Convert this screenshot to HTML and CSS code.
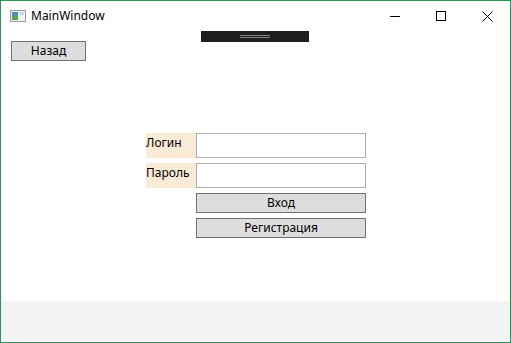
FILE: index.html
```html
<!DOCTYPE html>
<html lang="ru">
<head>
  <meta charset="UTF-8" />
  <title>MainWindow</title>
  <link rel="stylesheet" href="styles.css">
</head>
<body>
  <div class="window">
    <div class="titlebar">
      <svg class="app-icon" width="16" height="12" viewBox="0 0 16 12">
        <rect x="0.5" y="0.5" width="15" height="11" fill="#f4f4f4" stroke="#9a9a9a" />
        <rect x="2" y="2" width="6" height="8" fill="#4a8fb0" />
        <rect x="2" y="6" width="6" height="4" fill="#5aa25a" />
        <rect x="9" y="2" width="5" height="3" fill="#c8d8e0" />
      </svg>
      <span class="title">MainWindow</span>
      <div class="controls">
        <span class="ctl">
          <svg width="10" height="10" viewBox="0 0 10 10"><path d="M0 5.5h10" stroke="#000" /></svg>
        </span>
        <span class="ctl">
          <svg width="10" height="10" viewBox="0 0 10 10"><rect x="0.5" y="0.5" width="9" height="9" fill="none" stroke="#000" /></svg>
        </span>
        <span class="ctl">
          <svg width="11" height="11" viewBox="0 0 11 11"><path d="M0.5 0.5l10 10M10.5 0.5l-10 10" stroke="#000" /></svg>
        </span>
      </div>
    </div>

    <!-- debug toolbar over the content -->
    <div class="devbar"><span></span></div>

    <div class="content">
      <button class="btn back">Назад</button>

      <div class="login">
        <div class="label">Логин</div>
        <input class="field" type="text" />
        <div class="label">Пароль</div>
        <input class="field" type="password" />
        <button class="btn wide">Вход</button>
        <button class="btn wide">Регистрация</button>
      </div>
    </div>

    <div class="footer"></div>
  </div>
</body>
</html>
```

FILE: styles.css
```css
* {
  box-sizing: border-box;
  margin: 0;
  padding: 0;
}

body {
  font-family: "Noto Sans", "Open Sans", sans-serif;
  font-size: 12px;
  color: #000;
  background: #fff;
}

.window {
  position: relative;
  width: 511px;
  height: 343px;
  border: 1px solid #2a9454;
  display: flex;
  flex-direction: column;
}

.titlebar {
  height: 30px;
  display: flex;
  align-items: center;
}

.app-icon {
  margin-left: 9px;
  margin-top: -1px;
}

.title {
  margin-left: 5px;
  margin-top: -1px;
}

.controls {
  margin-left: auto;
  display: flex;
}

.ctl {
  width: 46px;
  height: 30px;
  display: flex;
  align-items: center;
  justify-content: center;
}

.devbar {
  position: absolute;
  top: 30px;
  left: 200px;
  width: 108px;
  height: 11px;
  background: #1e1e1e;
  display: flex;
  justify-content: center;
  padding-top: 4px;
}

.devbar span {
  width: 30px;
  height: 3px;
  border-top: 1px solid #808080;
  border-bottom: 1px solid #808080;
}

.content {
  flex: 1;
  padding: 10px 0 0 10px;
}

.btn {
  font-family: inherit;
  font-size: 12px;
  background: #dddddd;
  border: 1px solid #707070;
  height: 20px;
  line-height: 16px;
  color: #000;
}

.back {
  width: 75px;
  display: block;
}

.login {
  margin: 72px 0 0 135px;
  display: grid;
  grid-template-columns: 50px 170px;
  grid-auto-rows: auto;
  row-gap: 5px;
}

.label {
  background: #faebd7;
  height: 25px;
  padding-top: 1px;
}

.field {
  height: 25px;
  border: 1px solid #abadb3;
  background: #fff;
  margin-bottom: 0;
}

.wide {
  grid-column: 2;
}

.footer {
  height: 41px;
  background: #f3f3f3;
}
```
